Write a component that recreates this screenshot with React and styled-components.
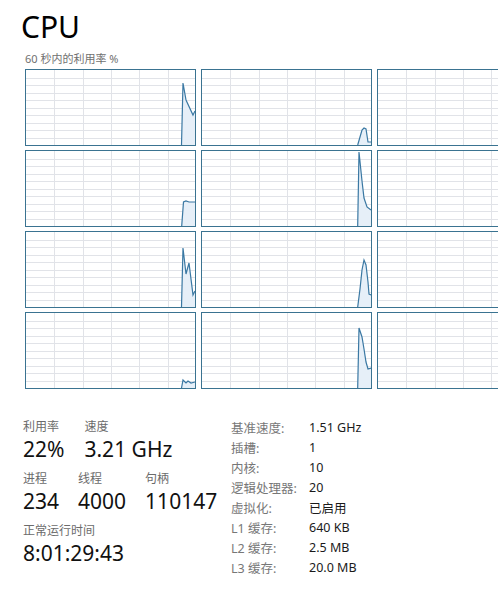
import styled, { createGlobalStyle } from "styled-components";

const GlobalStyle = createGlobalStyle`
  html, body {
    margin: 0;
    padding: 0;
    background: #ffffff;
    overflow: hidden;
  }
  body {
    font-family: "Noto Sans", "Noto Sans CJK SC", sans-serif;
    color: #1a1a1a;
  }
`;

const Page = styled.div`
  width: 498px;
  height: 604px;
  overflow: hidden;
  padding-top: 8px;
  box-sizing: border-box;
`;

const Title = styled.h1`
  margin: 0 0 0 21px;
  font-size: 30px;
  font-weight: 400;
  line-height: 38px;
  color: #000;
`;

const Caption = styled.div`
  margin: 5px 0 0 25px;
  font-size: 11px;
  line-height: 16px;
  color: #707070;
`;

const ChartGrid = styled.div`
  display: grid;
  grid-template-columns: repeat(3, 171px);
  grid-auto-rows: 77px;
  gap: 4px 5px;
  margin: 2px 0 0 25px;
`;

const Cell = styled.div`
  border: 1px solid #3a7391;
  box-sizing: border-box;
  background: #fff;
  svg {
    display: block;
    width: 100%;
    height: 100%;
  }
`;

const Stats = styled.div`
  display: flex;
  margin-top: 30px;
`;

const LeftStats = styled.div`
  width: 208px;
  padding-left: 23px;
  display: flex;
  flex-direction: column;
  gap: 8px;
`;

const StatRow = styled.div`
  display: flex;
  gap: ${(p) => p.$gap || 19}px;
`;

const Stat = styled.div`
  display: flex;
  flex-direction: column;
`;

const StatLabel = styled.div`
  font-size: 12px;
  line-height: 16px;
  color: #6b6b6b;
`;

const StatValue = styled.div`
  font-size: 21px;
  line-height: 28px;
  color: #111;
`;

const Specs = styled.div`
  display: grid;
  grid-template-columns: 78px auto;
  grid-auto-rows: 20px;
  align-items: center;
  font-size: 12.5px;
  margin-top: -2px;
`;

const SpecLabel = styled.div`
  color: #777;
`;

const SpecValue = styled.div`
  color: #1a1a1a;
`;

const series = [
  [[155.5, 75], [157, 13], [160, 30], [167, 45], [169, 41]],
  [[155.7, 75], [158, 67], [160, 60], [162, 58], [164, 59], [166, 72], [169, 72]],
  null,
  [[155.7, 75], [157.5, 51], [160, 50], [163, 51], [169, 51]],
  [[155.7, 75], [157, 1], [160, 30], [162, 47], [165, 56], [169, 59]],
  null,
  [[155.5, 75], [157, 16], [160, 42], [163, 31], [167, 63], [169, 59]],
  [[155.7, 75], [158, 57], [160, 38], [162, 28], [164, 33], [166, 50], [167, 62], [169, 63]],
  null,
  [[155.5, 75], [157, 67], [160, 70], [162, 68], [165, 70], [169, 69]],
  [[155.7, 75], [157, 15], [160, 24], [162, 36], [164, 49], [166, 56], [169, 55]],
  null,
];

function Chart({ points }) {
  const vLines = [1, 2, 3, 4, 5].map((i) => Math.round(i * 28.3) + 0.5);
  const hLines = [1, 2, 3, 4, 5, 6, 7, 8, 9].map((i) => Math.round(i * 7.5) + 0.5);
  const line = points ? points.map((p) => p.join(",")).join(" ") : "";
  const area = points ? `${line} 169,75` : "";
  return (
    <Cell>
      <svg viewBox="0 0 169 75" preserveAspectRatio="none">
        <g stroke="#e1e3e8" strokeWidth="1" shapeRendering="crispEdges">
          {vLines.map((x) => (
            <line key={"v" + x} x1={x} y1="0" x2={x} y2="75" />
          ))}
          {hLines.map((y) => (
            <line key={"h" + y} x1="0" y1={y} x2="169" y2={y} />
          ))}
        </g>
        {points && (
          <>
            <polygon points={area} fill="#e6eff8" />
            <polyline points={line} fill="none" stroke="#3a78a3" strokeWidth="1.2" />
          </>
        )}
      </svg>
    </Cell>
  );
}

const specs = [
  ["基准速度:", "1.51 GHz"],
  ["插槽:", "1"],
  ["内核:", "10"],
  ["逻辑处理器:", "20"],
  ["虚拟化:", "已启用"],
  ["L1 缓存:", "640 KB"],
  ["L2 缓存:", "2.5 MB"],
  ["L3 缓存:", "20.0 MB"],
];

export default function App() {
  return (
    <Page>
      <GlobalStyle />
      <Title>CPU</Title>
      <Caption>60 秒内的利用率 %</Caption>
      <ChartGrid>
        {series.map((pts, i) => (
          <Chart key={i} points={pts} />
        ))}
      </ChartGrid>
      <Stats>
        <LeftStats>
          <StatRow $gap={20}>
            <Stat>
              <StatLabel>利用率</StatLabel>
              <StatValue>22%</StatValue>
            </Stat>
            <Stat>
              <StatLabel>速度</StatLabel>
              <StatValue>3.21 GHz</StatValue>
            </Stat>
          </StatRow>
          <StatRow>
            <Stat>
              <StatLabel>进程</StatLabel>
              <StatValue>234</StatValue>
            </Stat>
            <Stat>
              <StatLabel>线程</StatLabel>
              <StatValue>4000</StatValue>
            </Stat>
            <Stat>
              <StatLabel>句柄</StatLabel>
              <StatValue>110147</StatValue>
            </Stat>
          </StatRow>
          <StatRow>
            <Stat>
              <StatLabel>正常运行时间</StatLabel>
              <StatValue>8:01:29:43</StatValue>
            </Stat>
          </StatRow>
        </LeftStats>
        <Specs>
          {specs.map(([k, v]) => (
            <>
              <SpecLabel key={k}>{k}</SpecLabel>
              <SpecValue key={k + "v"}>{v}</SpecValue>
            </>
          ))}
        </Specs>
      </Stats>
    </Page>
  );
}
